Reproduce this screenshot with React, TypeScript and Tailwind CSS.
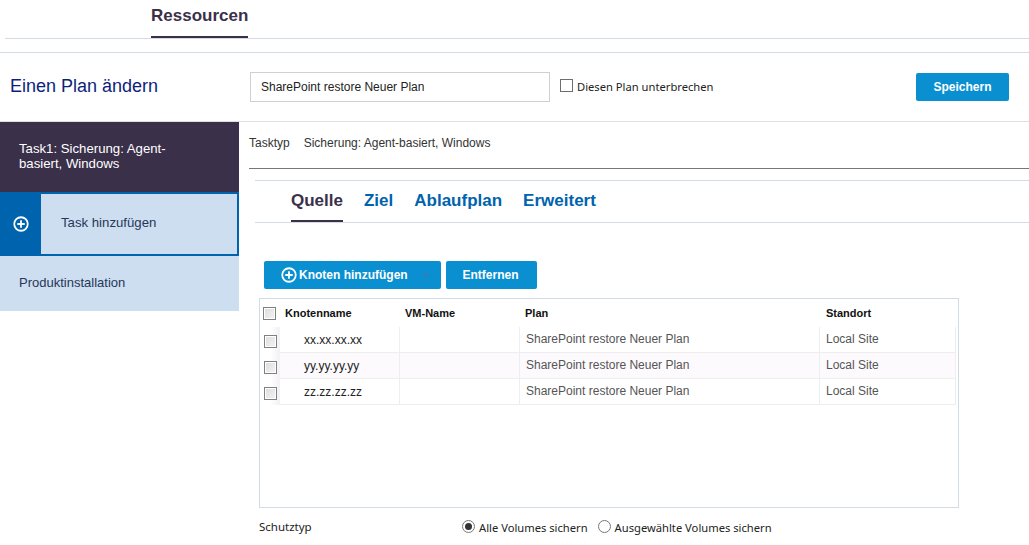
import { useState } from "react";

const rows = [
  { ip: "xx.xx.xx.xx", tint: "bg-white" },
  { ip: "yy.yy.yy.yy", tint: "bg-[#fdfafd]" },
  { ip: "zz.zz.zz.zz", tint: "bg-white" },
];

const PLAN = "SharePoint restore Neuer Plan";

function PlusCircle({ size }: { size: number }) {
  return (
    <svg width={size} height={size} viewBox="0 0 18 18" fill="none" stroke="white" className="shrink-0">
      <circle cx="9" cy="9" r="7.6" strokeWidth="2" />
      <path d="M9 4.8v8.4M4.8 9h8.4" strokeWidth="2" />
    </svg>
  );
}

function GridCheckbox() {
  return <div className="w-[13px] h-[13px] border border-[#808080] bg-gradient-to-br from-[#dcdcdc] to-[#f4f4f4] shadow-[inset_0_0_0_1px_#fff] shrink-0" />;
}

export default function App() {
  const [name, setName] = useState(PLAN);

  return (
    <div className="h-[545px] w-[1029px] overflow-hidden bg-white font-['Liberation_Sans',Arial,sans-serif] text-[12px] text-[#222]">
      {/* top tab */}
      <div className="h-[39px] ml-[5px] border-b border-[#d3dbe3] pl-[146px]">
        <div className="w-[97px] h-[38px] border-b-2 border-[#3b304a] pt-[6px] text-[17px] leading-[20px] font-bold text-[#3b304a] whitespace-nowrap">
          Ressourcen
        </div>
      </div>

      {/* plan header */}
      <div className="mt-[13px] h-[70px] border-y border-[#d3dbe3] border-b-[#dcdfe3] flex items-start">
        <div className="w-[250px] pl-[10px] pt-[22px] text-[18px] leading-[22px] text-[#0d1f7a] shrink-0">Einen Plan ändern</div>
        <input
          value={name}
          onChange={(e) => setName(e.target.value)}
          className="mt-[19px] w-[300px] h-[30px] border border-[#d0d0d0] px-[10px] text-[12px] text-[#222] outline-none shrink-0"
        />
        <div className="mt-[26px] ml-[10px] w-[13px] h-[13px] border border-[#6e6e6e] shrink-0" />
        <span className="mt-[26px] ml-[4px] text-[11.2px] leading-[16px] font-['Noto_Sans',sans-serif] text-[#222] whitespace-nowrap">Diesen Plan unterbrechen</span>
        <button className="ml-auto mr-[20px] mt-[20px] w-[93px] h-[28px] rounded-[2px] bg-[#0a8fd1] text-white font-bold text-[12px]">Speichern</button>
      </div>

      <div className="flex">
        {/* sidebar */}
        <div className="w-[239px] shrink-0 text-[13px]">
          <div className="h-[70px] bg-[#3b304a] pl-[19px] pr-[60px] pt-[19px] leading-[15px] text-[13.2px] text-white">Task1: Sicherung: Agent-basiert, Windows</div>
          <div className="h-[64px] flex border-2 border-[#0063ad] bg-[#ccdeef]">
            <div className="w-[41px] -ml-[2px] bg-[#0063ad] flex items-center justify-center shrink-0">
              <PlusCircle size={16} />
            </div>
            <div className="pl-[20px] pb-[2px] flex items-center text-[13.2px] text-[#27375a]">Task hinzufügen</div>
          </div>
          <div className="h-[55px] bg-[#ccdeef] pl-[19px] pb-[2px] flex items-center text-[#27375a]">Produktinstallation</div>
        </div>

        {/* content */}
        <div className="flex-1 min-w-0">
          <div className="ml-[10px] h-[47px] border-b border-[#777] flex gap-[14px] pt-[14px] leading-[14px] text-[12px] text-[#333]">
            <span>Tasktyp</span>
            <span>Sicherung: Agent-basiert, Windows</span>
          </div>

          <div className="ml-[16px] mt-[11px] h-[43px] border-y border-[#d3dbe3] flex gap-[21px] pl-[36px] text-[17px] font-bold">
            <div className="h-[41px] border-b-2 border-[#3b304a] pt-[10px] leading-[20px] text-[#3b304a]">Quelle</div>
            <div className="pt-[10px] leading-[20px] text-[#0063ad]">Ziel</div>
            <div className="pt-[10px] leading-[20px] text-[#0063ad]">Ablaufplan</div>
            <div className="pt-[10px] leading-[20px] text-[#0063ad]">Erweitert</div>
          </div>

          <div className="ml-[25px] mt-[38px] flex gap-[5px] text-white font-bold">
            <button className="w-[177px] h-[28px] rounded-[2px] bg-[#0a8fd1] flex items-center pl-[17px] relative">
              <PlusCircle size={16} />
              <span className="ml-[2px]">Knoten hinzufügen</span>
              <span className="absolute right-[11px] top-[13px] w-0 h-0 border-x-[4px] border-x-transparent border-t-[3px] border-t-[#3f78b5]" />
            </button>
            <button className="w-[91px] h-[28px] pr-[2px] rounded-[2px] bg-[#0a8fd1]">Entfernen</button>
          </div>

          {/* grid */}
          <div className="ml-[20px] mt-[9px] w-[700px] h-[210px] border border-[#d0dbe3]">
            <div className="h-[28px] pt-[1px] flex items-center font-bold text-[11px] text-[#111]">
              <div className="w-[25px] pl-[3px]"><GridCheckbox /></div>
              <div className="w-[120px]">Knotenname</div>
              <div className="w-[120px]">VM-Name</div>
              <div className="w-[301px]">Plan</div>
              <div>Standort</div>
            </div>
            {rows.map((r) => (
              <div key={r.ip} className="h-[26px] flex">
                <div className="w-[20px] pl-[4px] pt-[8px] bg-gradient-to-r from-white from-50% to-[#f1f1f6]"><GridCheckbox /></div>
                <div className={`w-[120px] ${r.tint} border-b border-r border-[#eeeeee] pl-[24px] pt-[6px] leading-[14px] text-[12px] text-[#222]`}>{r.ip}</div>
                <div className={`w-[120px] ${r.tint} border-b border-r border-[#eeeeee]`} />
                <div className={`w-[300px] ${r.tint} border-b border-r border-[#eeeeee] pl-[6px] pt-[5px] leading-[14px] text-[#555]`}>{PLAN}</div>
                <div className={`w-[136px] ${r.tint} border-b border-r border-[#eeeeee] pl-[6px] pt-[5px] leading-[14px] text-[#555]`}>Local Site</div>
              </div>
            ))}
          </div>

          {/* protection type */}
          <div className="ml-[20px] mt-[11px] flex items-start font-['Noto_Sans',sans-serif] text-[11.2px] leading-[16px] whitespace-nowrap text-[#222]">
            <span className="w-[203px] text-[11.5px]">Schutztyp</span>
            <div className="w-[13px] h-[13px] mt-[1px] rounded-full border border-[#777] flex items-center justify-center">
              <div className="w-[7px] h-[7px] rounded-full bg-[#333]" />
            </div>
            <span className="ml-[4px] mt-[1px]">Alle Volumes sichern</span>
            <div className="w-[13px] h-[13px] mt-[1px] ml-[10px] rounded-full border border-[#777]" />
            <span className="ml-[4px] mt-[1px]">Ausgewählte Volumes sichern</span>
          </div>
        </div>
      </div>
    </div>
  );
}
